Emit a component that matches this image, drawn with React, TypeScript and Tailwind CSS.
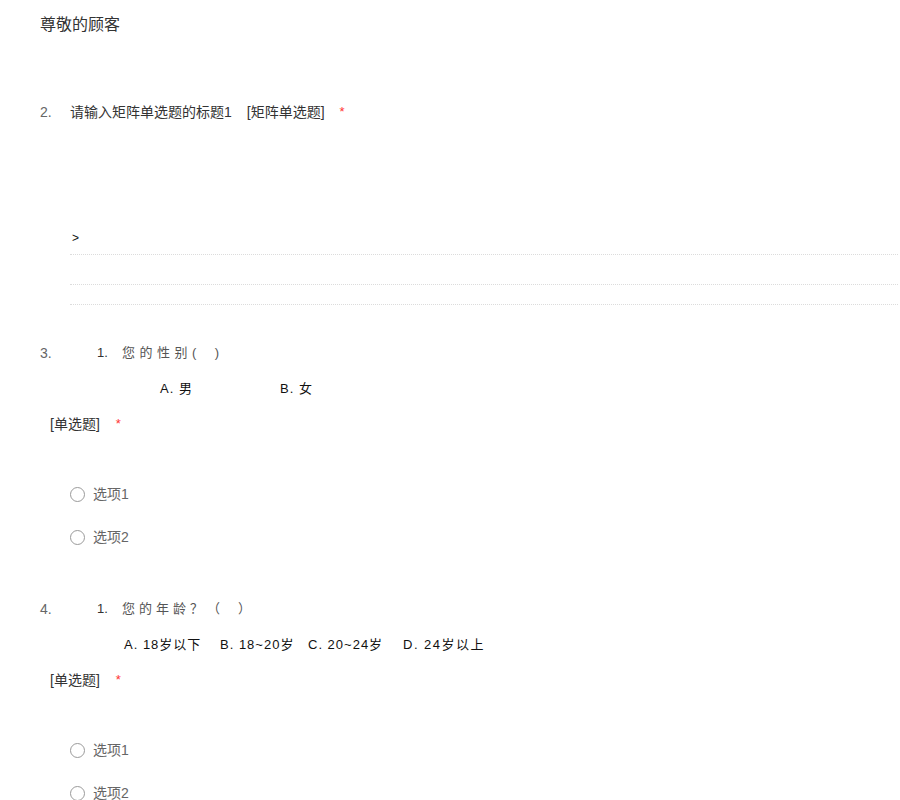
import React from 'react';

const sans = { fontFamily: '"Liberation Sans", "Noto Sans CJK SC", sans-serif' };

function Radio({ label, className = '' }: { label: string; className?: string }) {
  return (
    <div className={`flex items-center h-[20px] ml-[30px] ${className}`}>
      <span className="w-[15px] h-[15px] rounded-full border border-[#9a9a9a] bg-white" />
      <span className="ml-[8px] text-[14px] leading-[20px] text-[#666]">{label}</span>
    </div>
  );
}

function TypeTag({ className = '' }: { className?: string }) {
  return (
    <div className={`flex items-center h-[20px] ml-[10px] text-[14px] leading-[20px] ${className}`}>
      <span className="text-[#333]">[单选题]</span>
      <span className="ml-[16px] text-[13px] text-[#f33]">*</span>
    </div>
  );
}

export default function App() {
  return (
    <div className="min-h-[800px] bg-white pl-[40px] pr-[2px] pt-[14px]" style={sans}>
      <div className="h-[22px] text-[16px] leading-[22px] text-[#333]">尊敬的顾客</div>

      {/* question 2 */}
      <div className="mt-[66px] flex items-center h-[20px] text-[14px] leading-[20px]">
        <span className="w-[30px] text-[#666]">2.</span>
        <span className="text-[#333]">请输入矩阵单选题的标题1</span>
        <span className="ml-[15px] text-[#333]">[矩阵单选题]</span>
        <span className="ml-[15px] text-[13px] text-[#f33]">*</span>
      </div>

      <div className="ml-[30px] mt-[106px]">
        <div className="h-[20px] pl-[2px] text-[12px] leading-[20px] text-[#111]">&gt;</div>
        <div className="mt-[6px] border-t border-dotted border-[#dcdcdc]" />
        <div className="mt-[29px] border-t border-dotted border-[#dcdcdc]" />
        <div className="mt-[19px] border-t border-dotted border-[#dcdcdc]" />
      </div>

      {/* question 3 */}
      <div className="mt-[38px] flex items-center h-[20px] text-[13px] leading-[20px]">
        <span className="w-[57px] text-[14px] text-[#666]">3.</span>
        <span className="w-[25px] text-[#333]">1.</span>
        <span className="text-[#555] tracking-[4.5px]">您的性别(</span>
        <span className="ml-[14px] text-[#555]">)</span>
      </div>
      <div className="mt-[16px] flex items-center h-[20px] text-[13px] leading-[20px] text-[#111]">
        <span className="ml-[120px] w-[120px] tracking-[1px]">A. 男</span>
        <span className="tracking-[1px]">B. 女</span>
      </div>
      <TypeTag className="mt-[15px]" />
      <Radio label="选项1" className="mt-[50px]" />
      <Radio label="选项2" className="mt-[23px]" />

      {/* question 4 */}
      <div className="mt-[52px] flex items-center h-[20px] text-[13px] leading-[20px]">
        <span className="w-[57px] text-[14px] text-[#666]">4.</span>
        <span className="w-[25px] text-[#333]">1.</span>
        <span className="text-[#555] tracking-[4px]">您的年龄？（</span>
        <span className="ml-[14px] text-[#555]">）</span>
      </div>
      <div className="mt-[16px] flex items-center h-[20px] text-[13px] leading-[20px] text-[#111]">
        <span className="ml-[84px] w-[96px] tracking-[1px]">A. 18岁以下</span>
        <span className="w-[88px] tracking-[1px]">B. 18~20岁</span>
        <span className="w-[95px] tracking-[1px]">C. 20~24岁</span>
        <span className="tracking-[1.5px]">D. 24岁以上</span>
      </div>
      <TypeTag className="mt-[15px]" />
      <Radio label="选项1" className="mt-[50px]" />
      <Radio label="选项2" className="mt-[23px]" />
    </div>
  );
}
